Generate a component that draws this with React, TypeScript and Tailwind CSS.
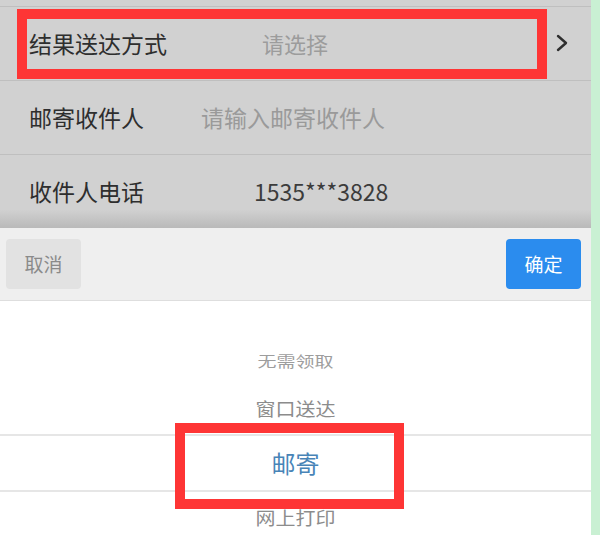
import React from "react";

const font = { fontFamily: '"Noto Sans CJK SC", "Noto Sans", sans-serif' };

function FormRow({
  label,
  value,
  labelWidth,
  valueClass,
  arrow,
}: {
  label: string;
  value: string;
  labelWidth: string;
  valueClass: string;
  arrow?: boolean;
}) {
  return (
    <div className="relative flex h-[74px] items-center border-t border-[#bfbfbf] pl-[29px] pr-[24px]">
      <span className={`${labelWidth} shrink-0 text-[23px] text-[#2e2e2e]`}>{label}</span>
      <span className={valueClass}>{value}</span>
      {arrow && (
        <svg className="absolute right-[23px] top-[27px] h-[18px] w-[12px]" viewBox="0 0 12 18" fill="none">
          <path d="M2 2 L10 9 L2 16" stroke="#2f2f2f" strokeWidth="2.4" strokeLinecap="round" strokeLinejoin="round" />
        </svg>
      )}
    </div>
  );
}

export default function App() {
  return (
    <div className="flex h-[535px] w-[600px] overflow-hidden bg-white" style={font}>
      <div className="flex w-[591px] flex-col">
        {/* Form behind the mask */}
        <div className="relative shrink-0 bg-[#d1d1d1]">
          <div className="h-[6px]" />
          <FormRow
            label="结果送达方式"
            value="请选择"
            labelWidth="w-[233px]"
            valueClass="text-[22px] text-[#9c9c9c]"
            arrow
          />
          <FormRow
            label="邮寄收件人"
            value="请输入邮寄收件人"
            labelWidth="w-[172px]"
            valueClass="text-[23px] text-[#9a9a9a]"
          />
          <div className="bg-gradient-to-b from-[#d1d1d1] from-75% to-[#b9b9b9]">
            <FormRow
              label="收件人电话"
              value="1535***3828"
              labelWidth="w-[225px]"
              valueClass="text-[23px] text-[#3c3c3c]"
            />
          </div>
          {/* annotation */}
          <div className="pointer-events-none absolute left-[17px] top-[9px] h-[70px] w-[530px] border-[10px] border-[#fe3535]" />
        </div>

        {/* Toolbar */}
        <div className="flex h-[73px] shrink-0 items-center justify-between border-b border-[#dedede] bg-[#efefef] pl-[6px] pr-[10px]">
          <button className="h-[50px] w-[75px] rounded-[4px] bg-[#e2e2e2] text-[19px] text-[#8a8a8a]">取消</button>
          <button className="h-[50px] w-[75px] rounded-[4px] bg-[#2b8cee] text-[19px] text-white">确定</button>
        </div>

        {/* Picker */}
        <div className="relative flex min-h-0 flex-1 flex-col overflow-hidden bg-white pt-[37px]">
          <div className="flex h-[46px] shrink-0 items-center justify-center">
            <span className="scale-y-[0.78] text-[19px] text-[#9d9d9d]">无需领取</span>
          </div>
          <div className="flex h-[50px] shrink-0 items-center justify-center">
            <span className="scale-y-[0.92] text-[20px] text-[#8c8c8c]">窗口送达</span>
          </div>
          <div className="flex h-[58px] shrink-0 items-center justify-center border-y-2 border-[#e6e6e6]">
            <span className="text-[24px] text-[#4884b7]">邮寄</span>
          </div>
          <div className="flex h-[52px] shrink-0 items-center justify-center">
            <span className="scale-y-[0.92] text-[20px] text-[#8c8c8c]">网上打印</span>
          </div>
          {/* annotation */}
          <div className="pointer-events-none absolute left-[175px] top-[122px] h-[86px] w-[229px] border-[10px] border-[#fe3535]" />
        </div>
      </div>
      <div className="w-[9px] bg-[#c9f0d3]" />
    </div>
  );
}
